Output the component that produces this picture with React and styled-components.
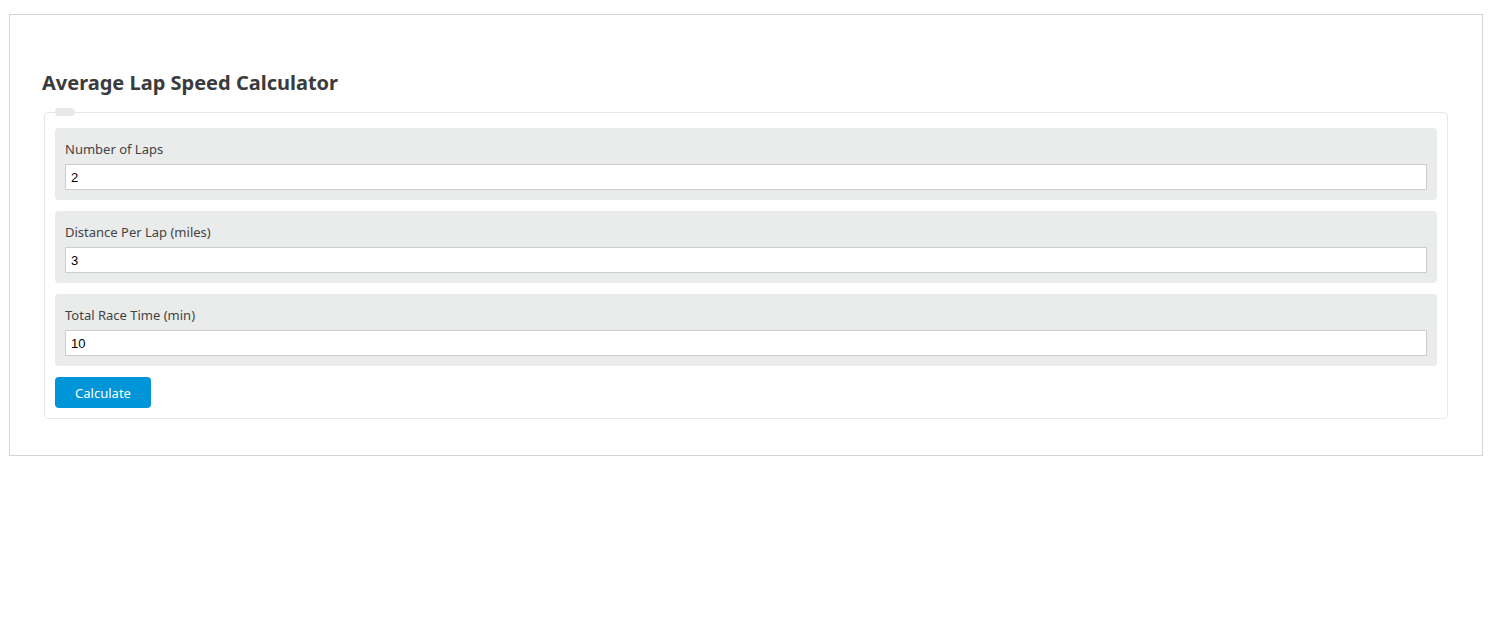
import styled, { createGlobalStyle } from 'styled-components';

const GlobalStyle = createGlobalStyle`
  html, body {
    margin: 0;
    padding: 0;
    background: #ffffff;
  }
  body {
    font-family: 'Noto Sans', 'Open Sans', sans-serif;
  }
`;

const fields = [
  { id: 'laps', label: 'Number of Laps', value: '2' },
  { id: 'distance', label: 'Distance Per Lap (miles)', value: '3' },
  { id: 'time', label: 'Total Race Time (min)', value: '10' },
];

export default function App() {
  return (
    <>
      <GlobalStyle />
      <Page>
        <Card>
          <Title>Average Lap Speed Calculator</Title>
          <Form onSubmit={(e) => e.preventDefault()}>
            <Legend />
            {fields.map((f) => (
              <FieldGroup key={f.id}>
                <Label htmlFor={f.id}>{f.label}</Label>
                <Input id={f.id} type="text" defaultValue={f.value} />
              </FieldGroup>
            ))}
            <Button type="submit">Calculate</Button>
          </Form>
        </Card>
      </Page>
    </>
  );
}

const Page = styled.div`
  padding: 14px 10px 0 9px;
`;

const Card = styled.section`
  width: 1474px;
  box-sizing: border-box;
  border: 1px solid #d3d3d8;
  padding: 55px 34px 36px 32px;
`;

const Title = styled.h2`
  margin: 0 0 16px;
  font-size: 20px;
  line-height: 26px;
  font-weight: 700;
  color: #3a3b3c;
`;

const Form = styled.form`
  position: relative;
  margin-left: 2px;
  border: 1px solid #e8e8e8;
  border-radius: 4px;
  padding: 15px 10px 10px 10px;
  display: flex;
  flex-direction: column;
  align-items: flex-start;
  gap: 11px;
`;

const Legend = styled.span`
  position: absolute;
  left: 10px;
  top: -5px;
  width: 20px;
  height: 8px;
  border-radius: 5px;
  background: #e8e9e9;
`;

const FieldGroup = styled.div`
  align-self: stretch;
  background: #eaebeb;
  border-radius: 4px;
  padding: 11px 10px 10px 10px;
  display: flex;
  flex-direction: column;
`;

const Label = styled.label`
  font-size: 13px;
  line-height: 20px;
  color: #444444;
  margin-bottom: 5px;
`;

const Input = styled.input`
  box-sizing: border-box;
  height: 26px;
  border: 1px solid #cdcdcd;
  background: #ffffff;
  padding: 0 5px;
  font-family: 'Liberation Sans', Arial, sans-serif;
  font-size: 13px;
  color: #000000;
  outline: none;
`;

const Button = styled.button`
  width: 96px;
  height: 31px;
  border: none;
  border-radius: 4px;
  background: #0095d9;
  color: #ffffff;
  font-family: 'Noto Sans', 'Open Sans', sans-serif;
  font-size: 13px;
  cursor: pointer;
`;
